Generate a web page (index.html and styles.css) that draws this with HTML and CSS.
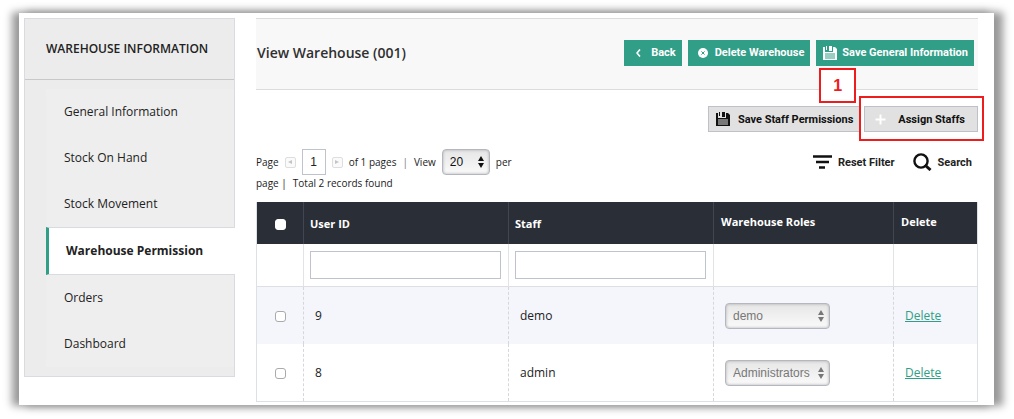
FILE: index.html
```html
<!DOCTYPE html>
<html lang="en">
<head>
<meta charset="utf-8">
<title>View Warehouse</title>
<link rel="stylesheet" href="styles.css">
</head>
<body>
<svg class="defs" aria-hidden="true">
  <symbol id="arrows" viewBox="0 0 6 12"><path d="M3 0L6 5H0zM3 12L0 7h6z" fill="currentColor"/></symbol>
  <symbol id="disk" viewBox="0 0 14 14">
    <path d="M0 1h2v5h8V1h2l2 2v11H0zM3 0h1v4H3zM6 0h3v5H6z" fill="currentColor"/>
    <path d="M2 8h10M2 10h10M2 12h10" stroke="var(--line)" stroke-width="1"/>
  </symbol>
</svg>
<div class="frame">
  <aside class="sidebar">
    <h3 class="sidebar-title">WAREHOUSE INFORMATION</h3>
    <nav class="tabs">
      <a class="tab" href="#">General Information</a>
      <a class="tab" href="#">Stock On Hand</a>
      <a class="tab" href="#">Stock Movement</a>
      <a class="tab active" href="#">Warehouse Permission</a>
      <a class="tab" href="#">Orders</a>
      <a class="tab" href="#">Dashboard</a>
    </nav>
  </aside>
  <main class="main">
    <header class="page-header">
      <h1 class="title">View Warehouse (001)</h1>
      <div class="actions">
        <button class="btn back"><svg width="5" height="8" viewBox="0 0 5 8"><path d="M4 0.5L1 4l3 3.5" fill="none" stroke="#fff" stroke-width="1.6"/></svg>Back</button>
        <button class="btn delete"><svg width="10" height="10" viewBox="0 0 10 10"><circle cx="5" cy="5" r="5" fill="#fff"/><path d="M3.4 3.4l3.2 3.2M6.6 3.4L3.4 6.6" stroke="#319e87" stroke-width="1"/></svg>Delete Warehouse</button>
        <button class="btn save"><svg width="14" height="14"><use href="#disk"/></svg>Save General Information</button>
      </div>
    </header>
    <div class="toolbar">
      <button class="btn gray staff"><svg width="14" height="14"><use href="#disk"/></svg>Save Staff Permissions</button>
      <div class="assign-wrap">
        <button class="btn gray assign"><svg width="11" height="11" viewBox="0 0 11 11"><path d="M5.5 0.5v10M0.5 5.5h10" stroke="#fff" stroke-width="2"/></svg>Assign Staffs</button>
        <span class="highlight"></span>
        <span class="callout">1</span>
      </div>
    </div>
    <div class="pager-row">
      <div class="pager">
        <div class="pager-line">
          <label for="page">Page</label>
          <button class="arrow prev" aria-label="Previous page"><svg width="4" height="4" viewBox="0 0 4 4"><path d="M4 0v4L0 2z" fill="#c4c4c4"/></svg></button>
          <input class="page-input" id="page" type="text" value="1">
          <button class="arrow next" aria-label="Next page"><svg width="4" height="4" viewBox="0 0 4 4"><path d="M0 0v4l4-2z" fill="#c4c4c4"/></svg></button>
          <span class="of">of 1 pages</span><span class="sep">|</span>
          <label for="limit">View</label>
          <span class="select limit"><select id="limit"><option>20</option></select><svg width="6" height="12"><use href="#arrows"/></svg></span>
          <span>per</span>
        </div>
        <div class="pager-total"><span>page |</span><span>Total 2 records found</span></div>
      </div>
      <div class="filters">
        <button class="link-btn reset"><svg width="19" height="14" viewBox="0 0 19 14"><path d="M0 1.5h19M3 7h13M6 12.5h6" stroke="#111" stroke-width="2.4"/></svg>Reset Filter</button>
        <button class="link-btn search"><svg width="19" height="18" viewBox="0 0 19 18"><circle cx="8" cy="8" r="6.6" fill="none" stroke="#111" stroke-width="2.4"/><path d="M12 12l5.5 5" stroke="#111" stroke-width="3"/></svg>Search</button>
      </div>
    </div>
    <table class="grid">
      <colgroup><col class="c-check"><col class="c-wide"><col class="c-wide"><col class="c-role"><col></colgroup>
      <thead>
        <tr class="head">
          <th class="check"><input class="box" type="checkbox" aria-label="Select all"></th>
          <th>User ID</th><th>Staff</th><th class="plain">Warehouse Roles</th><th class="plain">Delete</th>
        </tr>
        <tr class="filter">
          <td></td>
          <td><input class="field" type="text" aria-label="Filter by user ID"></td>
          <td><input class="field" type="text" aria-label="Filter by staff"></td>
          <td></td><td></td>
        </tr>
      </thead>
      <tbody>
        <tr class="odd">
          <td class="check"><input class="box" type="checkbox" aria-label="Select demo"></td>
          <td>9</td><td>demo</td>
          <td><span class="select role"><select disabled aria-label="Role of demo"><option>demo</option></select><svg width="6" height="12"><use href="#arrows"/></svg></span></td>
          <td><a class="del" href="#">Delete</a></td>
        </tr>
        <tr>
          <td class="check"><input class="box" type="checkbox" aria-label="Select admin"></td>
          <td>8</td><td>admin</td>
          <td><span class="select role"><select disabled aria-label="Role of admin"><option>Administrators</option></select><svg width="6" height="12"><use href="#arrows"/></svg></span></td>
          <td><a class="del" href="#">Delete</a></td>
        </tr>
      </tbody>
    </table>
  </main>
</div>
</body>
</html>
```
FILE: styles.css
```css
* { box-sizing: border-box; }
body {
  margin: 0;
  padding: 13px 20px 14px 19px;
  background: #fff;
  color: #303030;
  font-family: "Open Sans", sans-serif;
  font-size: 12px;
}
button { font-family: Roboto, "Liberation Sans", Arial, sans-serif; margin: 0; }
input, select { font-family: "Liberation Sans", Arial, sans-serif; margin: 0; }
.defs { position: absolute; width: 0; height: 0; }
.frame {
  display: flex;
  align-items: flex-start;
  gap: 21px;
  padding: 5px 16px 3px 5px;
  background: #fff;
  box-shadow: 8px 0 8px 1px #999, -6px 0 8px 1px #999;
}

.sidebar {
  flex: none;
  width: 211px;
  padding-bottom: 9px;
  background: #ececec;
  border: 1px solid #d8dce1;
}
.sidebar-title {
  margin: 0;
  padding: 0 21px;
  border-bottom: 1px solid #c6c8ca;
  line-height: 60px;
  font-size: 12px;
  font-weight: 600;
  color: #222;
  white-space: nowrap;
}
.tabs { margin: 9px 0 0 21px; background: #eee; }
.tab {
  display: block;
  padding-left: 18px;
  line-height: 46px;
  font-size: 12px;
  color: #222;
  text-decoration: none;
}
.tab.active {
  margin-right: -1px;
  padding-left: 17px;
  background: #fff;
  border: solid #d8dce1;
  border-width: 1px 0;
  border-left: 3px solid #319e87;
  font-weight: 700;
  color: #222;
}

.main { flex: 1; min-width: 0; }
.page-header {
  display: flex;
  align-items: center;
  justify-content: space-between;
  height: 72px;
  padding: 0 4px 3px 1px;
  background: #f8f8f8;
  border: solid #dcdcdc;
  border-width: 1px 0;
}
.title { margin: 0; font-size: 14px; font-weight: 600; }
.actions { display: flex; gap: 6px; }
.btn {
  display: flex;
  align-items: center;
  height: 26px;
  padding: 0 6px;
  background: #319e87;
  border: 0;
  color: #fff;
  font-size: 11px;
  font-weight: 700;
  white-space: nowrap;
  --line: #319e87;
}
.back { gap: 10px; padding-left: 12px; }
.delete { gap: 7px; padding-left: 10px; }
.save { gap: 5px; padding-left: 7px; }
.toolbar { display: flex; justify-content: flex-end; gap: 4px; margin-top: 16px; }
.gray { background: #e1e1e1; border: 1px solid #bfc1c8; color: #111; --line: #e1e1e1; }
.staff { gap: 8px; padding-left: 7px; }
.assign { gap: 12px; padding: 0 12px 0 10px; }
.assign-wrap { position: relative; }
.highlight {
  position: absolute;
  inset: -10px -6px -9px -5px;
  border: 2px solid #ee1c1c;
}
.callout {
  position: absolute;
  left: -45px;
  top: -38px;
  width: 37px;
  height: 35px;
  background: #fff;
  border: 2px solid #ee1c1c;
  color: #ee1c1c;
  font: 700 16px/31px "Liberation Sans", Arial, sans-serif;
  text-align: center;
}

.pager-row { display: flex; justify-content: space-between; align-items: flex-start; margin: 17px 0 11px; }
.pager { font-size: 10px; white-space: nowrap; color: #222; }
.pager-line { display: flex; align-items: center; gap: 6px; height: 26px; }
.arrow {
  display: flex;
  align-items: center;
  justify-content: center;
  width: 11px;
  height: 11px;
  padding: 0;
  background: #fafafa;
  border: 1px solid #dedede;
  border-radius: 2px;
}
.page-input {
  width: 24px;
  height: 26px;
  padding: 0;
  border: 1px solid #bfc3cc;
  font-size: 12px;
  text-align: center;
  color: #222;
}
.sep { color: #777; }
.pager-total { display: flex; gap: 6px; line-height: 16px; }
.select { position: relative; display: inline-flex; }
.select select {
  width: 100%;
  height: 26px;
  padding: 0 7px;
  appearance: none;
  background: linear-gradient(#e6e6e6, #fafafa);
  border: 1px solid #b4b7bf;
  border-radius: 4px;
  box-shadow: inset 0 0 3px #aaa;
  font-size: 12px;
  color: #111;
  opacity: 1;
}
.select select:disabled { color: #777; }
.select svg { position: absolute; right: 6px; top: 7px; color: #111; pointer-events: none; }
.limit { width: 48px; }
.role { width: 105px; }
.role svg { color: #777; }
.filters { display: flex; gap: 18px; padding: 3px 6px 0 0; }
.link-btn {
  display: flex;
  align-items: center;
  gap: 6px;
  height: 20px;
  padding: 0;
  background: none;
  border: 0;
  font-size: 11px;
  font-weight: 700;
  color: #222;
  white-space: nowrap;
}

.grid {
  width: 100%;
  table-layout: fixed;
  border-spacing: 0;
  border: 1px solid #dde0e5;
  border-top: 0;
}
.c-check { width: 46px; }
.c-wide { width: 205px; }
.c-role { width: 180px; }
.grid th, .grid td { padding: 0 7px 0 6px; text-align: left; vertical-align: middle; }
.head th { height: 42px; background: #2a2e37; color: #fff; font-size: 11px; font-weight: 700; border-left: 1px solid #414650; }
.grid .head .plain { padding: 0 7px 3px; }
.filter td { height: 43px; border-left: 1px solid #e1e3e6; border-bottom: 1px solid #dddfe3; }
.grid tr > :first-child { border-left: 0; }
.field { display: block; width: 100%; height: 28px; border: 1px solid #bfc3cc; background: #fff; }
.grid tbody td { height: 57px; padding-left: 11px; border-left: 1px dashed #d5d7dc; font-size: 12px; color: #222; }
.grid .check { padding: 0; text-align: center; }
.grid tbody .check { padding: 0; }
.odd { background: #f4f6fb; }
.box {
  display: inline-block;
  width: 11px;
  height: 11px;
  appearance: none;
  background: #fff;
  border: 1px solid #aaa;
  border-radius: 3px;
  vertical-align: middle;
}
.head .box { border-color: #fff; }
.del { color: #319e87; }
```
